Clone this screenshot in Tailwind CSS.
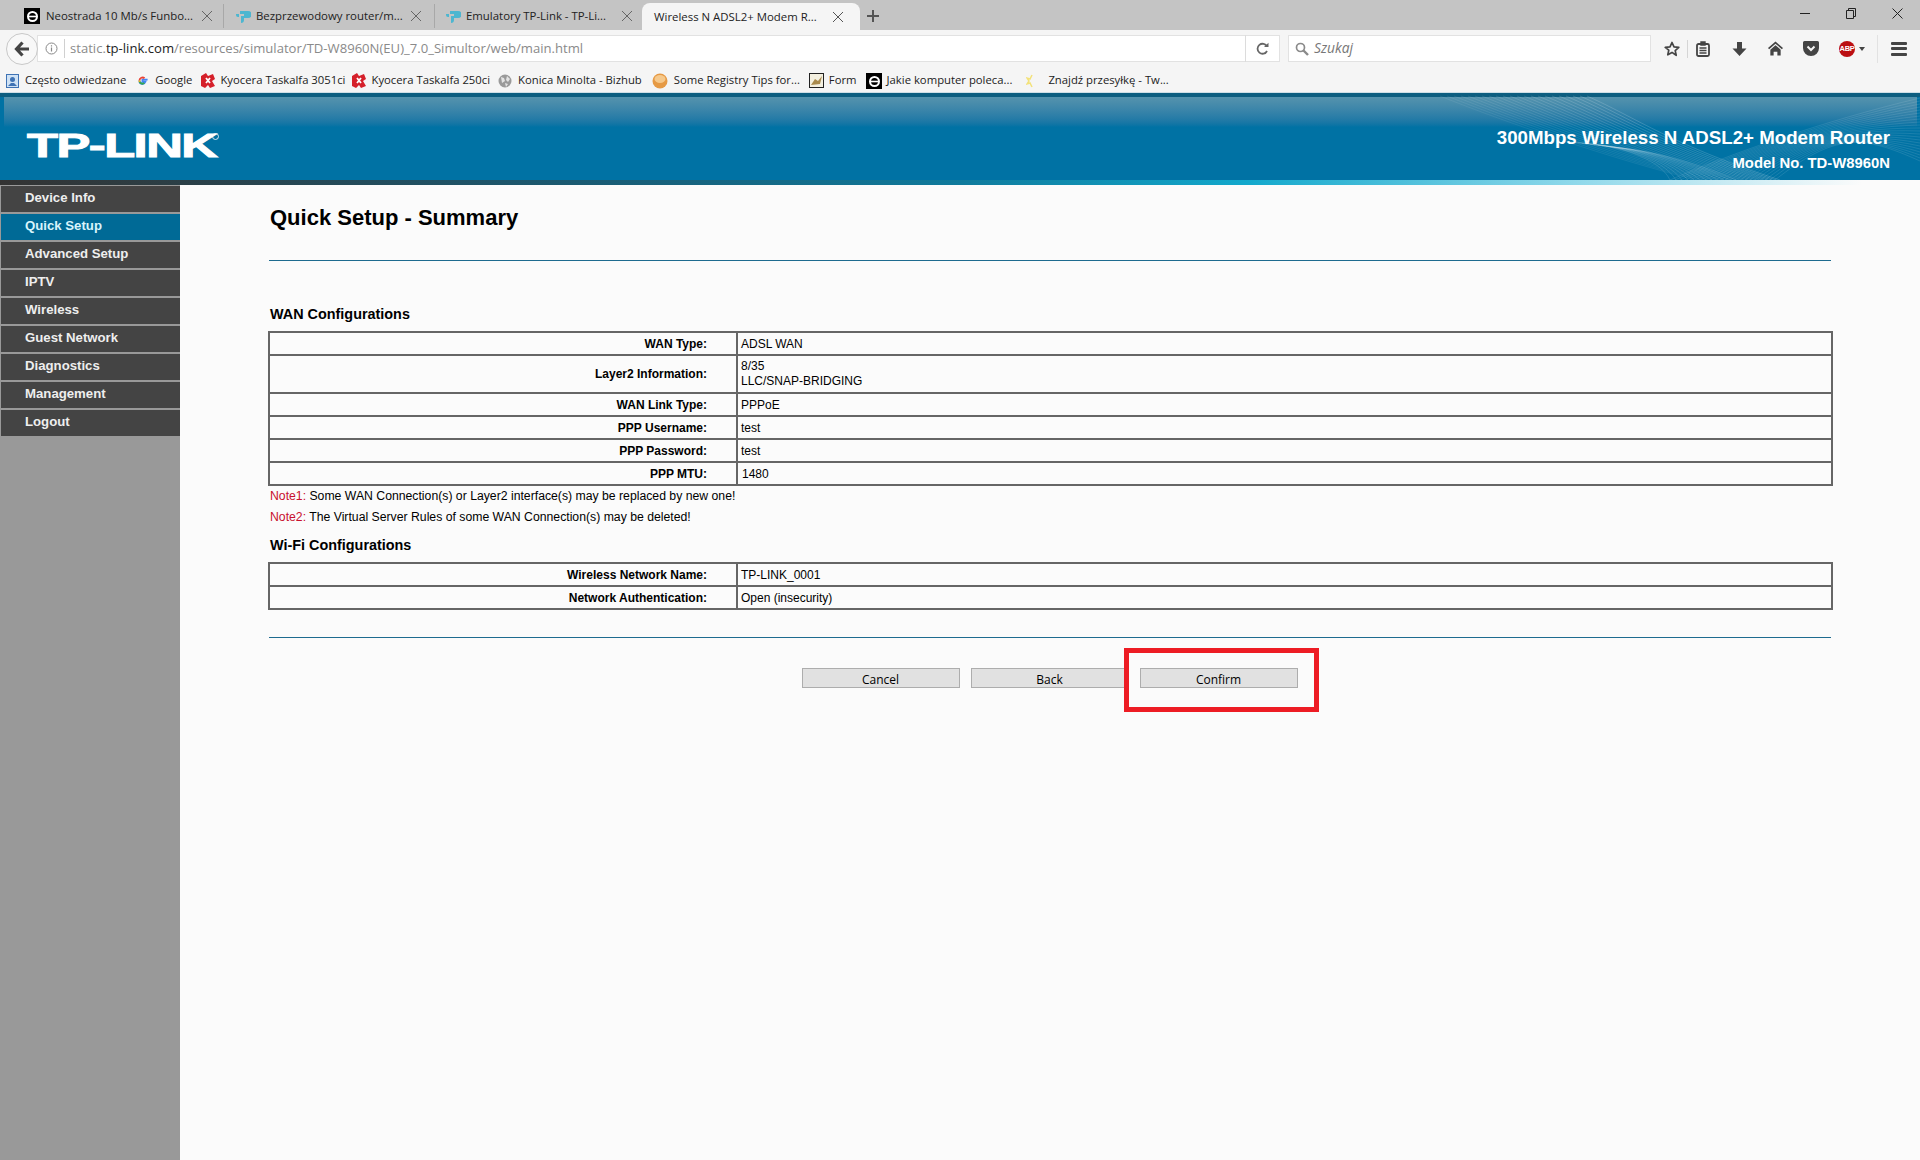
<!DOCTYPE html>
<html lang="en">
<head>
  <meta charset="UTF-8">
  <title>Wireless N ADSL2+ Modem Router</title>
  <script src="https://cdn.jsdelivr.net/npm/@tailwindcss/browser@4"></script>
</head>
<body class="w-[1920px] h-[1160px] overflow-hidden bg-[#fbfbfb] font-['Liberation_Sans',sans-serif] text-black">

  <!-- Browser tabs -->
  <div class="h-[30px] bg-[#c4c4c4] flex items-center font-['Open_Sans',sans-serif] text-[11.4px] text-[#222]">
    <div class="w-[224px] h-[24px] mt-[2px] pl-[24px] pr-[10px] flex items-center border-r border-[#a8a8a8]">
      <svg class="w-[16px] h-[16px] shrink-0" viewBox="0 0 16 16"><rect width="16" height="16" fill="#000"/><circle cx="8.5" cy="8.5" r="4.5" fill="none" stroke="#fff" stroke-width="2"/><path d="M4 8.500h9" stroke="#fff" stroke-width="1.600"/></svg>
      <span class="ml-[6px] flex-1 whitespace-nowrap">Neostrada 10 Mb/s Funbo...</span>
      <svg class="w-[12px] h-[12px]" viewBox="0 0 12 12"><path d="M1 1l10 10M11 1L1 11" stroke="#666" fill="none"/></svg>
    </div>
    <div class="w-[211px] h-[24px] mt-[2px] pl-[11px] pr-[12px] flex items-center border-r border-[#a8a8a8]">
      <svg class="w-[16px] h-[16px] shrink-0" viewBox="0 0 16 16"><path d="M5 3h8a2 2 0 0 1 0 7H9v2a3 3 0 0 1-3 3V8h3V6H5z M1 6h3v3H3a2 2 0 0 1-2-2z" fill="#4db6d0"/></svg>
      <span class="ml-[5px] flex-1 whitespace-nowrap">Bezprzewodowy router/m...</span>
      <svg class="w-[12px] h-[12px]" viewBox="0 0 12 12"><path d="M1 1l10 10M11 1L1 11" stroke="#666" fill="none"/></svg>
    </div>
    <div class="w-[207px] h-[24px] mt-[2px] pl-[10px] pr-[9px] flex items-center">
      <svg class="w-[16px] h-[16px] shrink-0" viewBox="0 0 16 16"><path d="M5 3h8a2 2 0 0 1 0 7H9v2a3 3 0 0 1-3 3V8h3V6H5z M1 6h3v3H3a2 2 0 0 1-2-2z" fill="#4db6d0"/></svg>
      <span class="ml-[5px] flex-1 whitespace-nowrap">Emulatory TP-Link - TP-Li...</span>
      <svg class="w-[12px] h-[12px]" viewBox="0 0 12 12"><path d="M1 1l10 10M11 1L1 11" stroke="#666" fill="none"/></svg>
    </div>
    <div class="w-[218px] h-[27px] mt-[3px] pl-[12px] pr-[16px] flex items-center bg-[#f5f5f5] rounded-t-[8px]">
      <span class="flex-1 whitespace-nowrap">Wireless N ADSL2+ Modem R...</span>
      <svg class="w-[12px] h-[12px]" viewBox="0 0 12 12"><path d="M1 1l10 10M11 1L1 11" stroke="#555" fill="none"/></svg>
    </div>
    <svg class="w-[14px] h-[14px] ml-[6px] mt-[2px]" viewBox="0 0 14 14"><path d="M7 1v12M1 7h12" stroke="#555" stroke-width="2"/></svg>
    <div class="ml-auto flex items-center h-full pb-[4px]">
      <div class="w-[46px] flex justify-center"><div class="w-[10px] h-px bg-[#222]"></div></div>
      <div class="w-[46px] flex justify-center">
        <svg class="w-[10px] h-[11px]" viewBox="0 0 10 11"><path d="M.5 2.500h7v8h-7zM2.500 2.500v-2h7v8h-2" fill="none" stroke="#222"/></svg>
      </div>
      <div class="w-[46px] flex justify-center">
        <svg class="w-[11px] h-[11px]" viewBox="0 0 11 11"><path d="M.5.5l10 10M10.500.5l-10 10" stroke="#222"/></svg>
      </div>
    </div>
  </div>

  <!-- Browser toolbar -->
  <div class="h-[37px] bg-[#f5f5f5] flex items-center pl-[6px]">
    <div class="relative z-10 w-[32px] h-[32px] rounded-full border border-[#c8c8c8] bg-[#f8f8f8] flex items-center justify-center shrink-0">
      <svg class="w-[16px] h-[16px]" viewBox="0 0 16 16"><path d="M8.500 1.500L2.500 8l6 6.500M3 8h12" fill="none" stroke="#444" stroke-width="3.200"/></svg>
    </div>
    <div class="w-[1243px] h-[27px] -ml-px bg-white border border-[#e2e2e2] flex items-center font-['Open_Sans',sans-serif] text-[13.1px] text-[#8a8a8a]">
      <svg class="w-[13px] h-[13px] ml-[7px] shrink-0" viewBox="0 0 13 13"><circle cx="6.500" cy="6.500" r="5.500" fill="none" stroke="#888"/><path d="M6.500 5.500v4M6.500 3.200v1.300" stroke="#888" stroke-width="1.200"/></svg>
      <div class="w-px h-[19px] bg-[#d0d0d0] ml-[6px] mr-[5px]"></div>
      <span class="whitespace-nowrap">static.<span class="text-[#222]">tp-link.com</span>/resources/simulator/TD-W8960N(EU)_7.0_Simultor/web/main.html</span>
      <div class="ml-auto w-px h-[27px] bg-[#dcdcdc]"></div>
      <svg class="w-[13px] h-[13px] mx-[10px]" viewBox="0 0 13 13"><path d="M11 4.500A5 5 0 1 0 11 9" fill="none" stroke="#666" stroke-width="1.800"/><path d="M8 5h4.500V.8z" fill="#666"/></svg>
    </div>
    <div class="w-[363px] h-[27px] ml-[8px] bg-white border border-[#e2e2e2] flex items-center font-['Open_Sans',sans-serif] italic text-[13.8px] text-[#777]">
      <svg class="w-[14px] h-[14px] ml-[6px] mr-[5px]" viewBox="0 0 14 14"><circle cx="5.500" cy="5.500" r="4" fill="none" stroke="#8a8a8a" stroke-width="1.700"/><path d="M8.500 8.500l4.500 4.500" stroke="#8a8a8a" stroke-width="2.400"/></svg>
      <span>Szukaj</span>
    </div>
    <div class="flex items-center">
      <svg class="w-[16px] h-[16px] ml-[13px]" viewBox="0 0 16 16"><path d="M8 1.500l2 4.400 4.800.5-3.600 3.200 1 4.700L8 11.400l-4.200 2.400 1-4.700L1.200 6.400l4.800-.5z" fill="none" stroke="#444" stroke-width="1.700" stroke-linejoin="round"/></svg>
      <div class="w-px h-[18px] bg-[#d5d5d5] ml-[7px]"></div>
      <svg class="w-[14px] h-[16px] ml-[8px]" viewBox="0 0 14 16"><rect x="1" y="3" width="12" height="12" rx="1.500" fill="none" stroke="#444" stroke-width="1.800"/><path d="M5 1h4v3H5zM3.500 7h7M3.500 9.500h7M3.500 12h7" stroke="#444" stroke-width="1.400" fill="#444"/></svg>
      <svg class="w-[15px] h-[16px] ml-[22px]" viewBox="0 0 14 16"><path d="M4.500 1h5v6.500H14L7 15 0 7.500h4.500z" fill="#444"/></svg>
      <svg class="w-[15px] h-[15px] ml-[21px]" viewBox="0 0 16 15"><path d="M8 0l8 7-1.200 1.300L8 2.400 1.200 8.300 0 7z" fill="#444"/><path d="M8 4l5.500 4.700V15H10v-4H6v4H2.500V8.700z" fill="#444"/></svg>
      <svg class="w-[16px] h-[15px] ml-[20px]" viewBox="0 0 16 15"><path d="M1.500 0h13A1.500 1.500 0 0 1 16 1.500V7a8 8 0 0 1-16 0V1.500A1.500 1.500 0 0 1 1.500 0z" fill="#444"/><path d="M4.500 5.500L8 9l3.500-3.500" fill="none" stroke="#f5f5f5" stroke-width="2"/></svg>
      <div class="w-[16px] h-[16px] ml-[20px] rounded-full bg-[#bb0f12] flex items-center justify-center text-white font-bold text-[7.5px] tracking-[-0.3px] leading-none">ABP</div>
      <div class="ml-[4px] border-x-[3px] border-x-transparent border-t-[4px] border-t-[#444]"></div>
      <div class="w-px h-[28px] bg-[#e2e2e2] ml-[12px]"></div>
      <div class="ml-[13px] w-[16px] flex flex-col gap-[2.5px]">
        <div class="h-[3px] bg-[#444] rounded-[1px]"></div>
        <div class="h-[3px] bg-[#444] rounded-[1px]"></div>
        <div class="h-[3px] bg-[#444] rounded-[1px]"></div>
      </div>
    </div>
  </div>

  <!-- Bookmarks bar -->
  <div class="h-[25px] pt-[2px] bg-[#f5f5f5] flex items-center pl-[6px] font-['Open_Sans',sans-serif] text-[11.3px] text-[#222] whitespace-nowrap">
    <svg class="w-[13px] h-[14px]" viewBox="0 0 13 14"><rect x=".5" y=".5" width="12" height="13" fill="#cfe2f5" stroke="#3f73b5"/><circle cx="6.500" cy="5.500" r="2.500" fill="#3f73b5"/><path d="M2 12l3-3h3l3 3" fill="#3f73b5"/></svg>
    <span class="ml-[6px]">Często odwiedzane</span>
    <svg class="w-[13px] h-[13px] ml-[10px]" viewBox="0 0 14 14"><path d="M12.500 6H7v2.400h3.100A3.300 3.300 0 0 1 3.700 7" fill="none" stroke="#4285f4" stroke-width="2"/><path d="M3.700 7a3.300 3.300 0 0 1 5.500-2.400" fill="none" stroke="#ea4335" stroke-width="2"/><path d="M3.700 7a3.300 3.300 0 0 0 .4 1.600" fill="none" stroke="#fbbc05" stroke-width="2"/><path d="M4 8.500a3.300 3.300 0 0 0 5 1.300" fill="none" stroke="#34a853" stroke-width="2"/></svg>
    <span class="ml-[6px]">Google</span>
    <svg class="w-[14px] h-[15px] ml-[9px]" viewBox="0 0 14 15"><path d="M0 3l5-3 2 3 5-2 2 5-3 2 3 5-5 2-2-3-3 3-4-2z" fill="#d5202a"/><path d="M5 5l4 5M9 5l-4 5" stroke="#fff" stroke-width="1.800"/></svg>
    <span class="ml-[5px]">Kyocera Taskalfa 3051ci</span>
    <svg class="w-[14px] h-[15px] ml-[7px]" viewBox="0 0 14 15"><path d="M0 3l5-3 2 3 5-2 2 5-3 2 3 5-5 2-2-3-3 3-4-2z" fill="#d5202a"/><path d="M5 5l4 5M9 5l-4 5" stroke="#fff" stroke-width="1.800"/></svg>
    <span class="ml-[5px]">Kyocera Taskalfa 250ci</span>
    <svg class="w-[14px] h-[14px] ml-[8px]" viewBox="0 0 14 14"><circle cx="7" cy="7" r="6.500" fill="#9a9a9a"/><path d="M3 3l3 1 1 3-3 2zM9 2l3 3-2 3-2-2zM7 9l3 1-2 3z" fill="#e4e4e4"/></svg>
    <span class="ml-[6px]">Konica Minolta - Bizhub</span>
    <svg class="w-[16px] h-[16px] ml-[10px]" viewBox="0 0 16 16"><circle cx="8" cy="8" r="7.500" fill="#e69a45"/><ellipse cx="8" cy="6" rx="5.500" ry="4" fill="#f6c98c"/></svg>
    <span class="ml-[6px]">Some Registry Tips for...</span>
    <svg class="w-[15px] h-[15px] ml-[9px]" viewBox="0 0 15 15"><rect x=".5" y=".5" width="14" height="14" fill="#f4f0e0" stroke="#222"/><path d="M2 12l4-6 3 2 4-5-2 8z" fill="#a98a4c"/></svg>
    <span class="ml-[5px]">Form</span>
    <svg class="w-[16px] h-[16px] ml-[9px]" viewBox="0 0 16 16"><rect width="16" height="16" fill="#000"/><circle cx="8.500" cy="8.500" r="4.500" fill="none" stroke="#fff" stroke-width="2"/><path d="M4 8.500h9" stroke="#fff" stroke-width="1.600"/></svg>
    <span class="ml-[5px]">Jakie komputer poleca...</span>
    <svg class="w-[12px] h-[14px] ml-[14px]" viewBox="0 0 12 14"><path d="M6 1L4 5 1 4l2 3-2 3 3-1 2 4" fill="none" stroke="#f3e27a" stroke-width="1.500"/></svg>
    <span class="ml-[10px]">Znajdź przesyłkę - Tw...</span>
  </div>

  <!-- Router banner -->
  <div class="relative h-[93px] bg-[#0072a4] overflow-hidden">
    <div class="h-[1px] bg-[#cfdfe6]"></div>
    <div class="h-[4px] bg-[#0d5e80]"></div>
    <div class="h-[30px] ml-[4px] mr-[3px] bg-gradient-to-b from-[#5593ad] to-[#0072a4]"></div>
    <div class="absolute inset-x-0 bottom-0 h-[5px] bg-[linear-gradient(to_right,#333_0%,#1a5a72_30%,#0f7a9c_50%,#12a8cc_65%,#8fd8ea_82%,#fbfbfb_97%)]"></div>
    <svg id="waves" class="absolute right-0 top-0 w-[520px] h-[88px]" viewBox="0 0 520 88" fill="none" stroke="#fff" stroke-width=".6"></svg>
    <div class="absolute left-[27px] top-[36px] text-white font-bold text-[34px] leading-[34px] tracking-[-1px] scale-x-[1.49] origin-left [-webkit-text-stroke:1px_white]">TP-LINK</div>
    <div class="absolute left-[212px] top-[41px] w-[7px] h-[7px] rounded-full border border-white/80"></div>
    <div class="absolute right-[30px] top-[34px] text-right text-white font-bold">
      <div class="text-[18.7px] leading-[24px]">300Mbps Wireless N ADSL2+ Modem Router</div>
      <div class="text-[14.85px] leading-[18px] mt-[4px]">Model No. TD-W8960N</div>
    </div>
  </div>

  <div class="flex h-[975px]">
    <!-- Router menu -->
    <div class="w-[180px] h-full shrink-0 bg-[#999] pt-px pl-px flex flex-col gap-[2px] text-[13.2px] font-bold text-[#eee]">
      <div class="h-[26px] pl-[24px] pb-[3px] flex items-center bg-[#444]">Device Info</div>
      <div class="h-[26px] pl-[24px] pb-[3px] flex items-center bg-[#006a96] text-[#d8f4fb]">Quick Setup</div>
      <div class="h-[26px] pl-[24px] pb-[3px] flex items-center bg-[#444]">Advanced Setup</div>
      <div class="h-[26px] pl-[24px] pb-[3px] flex items-center bg-[#444]">IPTV</div>
      <div class="h-[26px] pl-[24px] pb-[3px] flex items-center bg-[#444]">Wireless</div>
      <div class="h-[26px] pl-[24px] pb-[3px] flex items-center bg-[#444]">Guest Network</div>
      <div class="h-[26px] pl-[24px] pb-[3px] flex items-center bg-[#444]">Diagnostics</div>
      <div class="h-[26px] pl-[24px] pb-[3px] flex items-center bg-[#444]">Management</div>
      <div class="h-[26px] pl-[24px] pb-[3px] flex items-center bg-[#444]">Logout</div>
    </div>

    <!-- Quick setup summary -->
    <div class="relative flex-1 pl-[88px] pr-[87px] text-[12px]">
      <h1 class="text-[22px] leading-[26px] font-bold pl-[2px] pt-[20px] pb-[29px]">Quick Setup - Summary</h1>
      <div class="h-px bg-[#1d6b8f] ml-[1px] mr-[2px]"></div>
      <h2 class="text-[14.4px] leading-[16px] font-bold pl-[2px] mt-[45px] mb-[9px]">WAN Configurations</h2>

      <div class="border-2 border-[#666]">
        <div class="flex h-[23px] items-center border-b-2 border-[#666]"><div class="w-[468px] h-full flex items-center justify-end pr-[29px] font-bold border-r-2 border-[#666]">WAN Type:</div><div class="pl-[3px]">ADSL WAN</div></div>
        <div class="flex h-[38px] items-center border-b-2 border-[#666]"><div class="w-[468px] h-full flex items-center justify-end pr-[29px] font-bold border-r-2 border-[#666]">Layer2 Information:</div><div class="pl-[3px] leading-[15px]">8/35<br>LLC/SNAP-BRIDGING</div></div>
        <div class="flex h-[23px] items-center border-b-2 border-[#666]"><div class="w-[468px] h-full flex items-center justify-end pr-[29px] font-bold border-r-2 border-[#666]">WAN Link Type:</div><div class="pl-[3px]">PPPoE</div></div>
        <div class="flex h-[23px] items-center border-b-2 border-[#666]"><div class="w-[468px] h-full flex items-center justify-end pr-[29px] font-bold border-r-2 border-[#666]">PPP Username:</div><div class="pl-[3px]">test</div></div>
        <div class="flex h-[23px] items-center border-b-2 border-[#666]"><div class="w-[468px] h-full flex items-center justify-end pr-[29px] font-bold border-r-2 border-[#666]">PPP Password:</div><div class="pl-[3px]">test</div></div>
        <div class="flex h-[21px] items-center"><div class="w-[468px] h-full flex items-center justify-end pr-[29px] font-bold border-r-2 border-[#666]">PPP MTU:</div><div class="pl-[4px]">1480</div></div>
      </div>

      <p class="pl-[2px] leading-[21px] text-[12.24px]"><span class="text-[#c8102e]">Note1:</span> Some WAN Connection(s) or Layer2 interface(s) may be replaced by new one!</p>
      <p class="pl-[2px] leading-[21px] text-[12.24px]"><span class="text-[#c8102e]">Note2:</span> The Virtual Server Rules of some WAN Connection(s) may be deleted!</p>
      <h2 class="text-[14.4px] leading-[16px] font-bold pl-[2px] mt-[9px] mb-[9px]">Wi-Fi Configurations</h2>

      <div class="border-2 border-[#666]">
        <div class="flex h-[23px] items-center border-b-2 border-[#666]"><div class="w-[468px] h-full flex items-center justify-end pr-[29px] font-bold border-r-2 border-[#666]">Wireless Network Name:</div><div class="pl-[3px]">TP-LINK_0001</div></div>
        <div class="flex h-[21px] items-center"><div class="w-[468px] h-full flex items-center justify-end pr-[29px] font-bold border-r-2 border-[#666]">Network Authentication:</div><div class="pl-[3px]">Open (insecurity)</div></div>
      </div>

      <div class="h-px bg-[#1d6b8f] ml-[1px] mr-[2px] mt-[27px]"></div>

      <div class="flex justify-center gap-[11px] mt-[30px] pr-[2px] font-['Open_Sans',sans-serif] text-[12px]">
        <button class="w-[158px] h-[20px] leading-[22px] bg-[#e1e1e1] border border-[#adadad]">Cancel</button>
        <button class="w-[158px] h-[20px] leading-[22px] bg-[#e1e1e1] border border-[#adadad]">Back</button>
        <button class="w-[158px] h-[20px] leading-[22px] bg-[#e1e1e1] border border-[#adadad]">Confirm</button>
      </div>

      <!-- annotation drawn over the page -->
      <div class="absolute left-[944px] top-[463px] w-[195px] h-[64px] border-[5px] border-[#ed1c24]"></div>
    </div>
  </div>

  <script>
    // fine line bundles in the banner's right corner
    const waves = document.getElementById('waves');
    let paths = '';
    for (let i = 0; i < 22; i++) {
      const o = (0.12 + 0.008 * i).toFixed(3);
      paths += `<path stroke-opacity="${o}" d="M${40 + i * 7} 4C${110 + i * 6} ${32 - i * 0.3} ${210 + i * 3} ${66 - i * 0.6} ${296 + i * 4} 88"/>`;
      paths += `<path stroke-opacity="0.18" d="M${270 + i * 5} 88C${330 + i * 5} ${62 - i} ${420 + i * 2} ${30 + i * 0.6} 520 ${6 + i * 3}"/>`;
    }
    for (let i = 0; i < 12; i++) {
      paths += `<path stroke-opacity="0.2" d="M${170 + i * 4} ${50 + i * 0.5}C${215 + i * 3} ${52 + i * 0.5} ${260 + i * 3} ${66 + i * 0.3} ${270 + i * 6} 88"/>`;
    }
    waves.innerHTML = paths;
  </script>
</body>
</html>
